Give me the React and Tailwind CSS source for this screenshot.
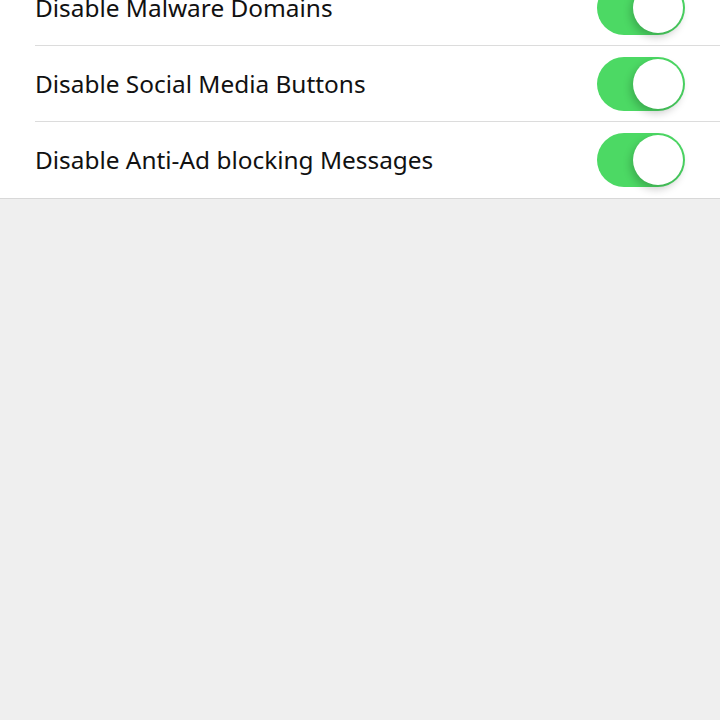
import React from "react";

const rows = [
  "Disable Malware Domains",
  "Disable Social Media Buttons",
  "Disable Anti-Ad blocking Messages",
];

function Toggle() {
  return (
    <div className="relative w-[88px] h-[54px] rounded-full bg-[#4cd964] shrink-0">
      <div className="absolute right-[2px] top-[2px] w-[50px] h-[50px] rounded-full bg-white shadow-[-2px_4px_8px_rgba(0,0,0,0.22)]" />
    </div>
  );
}

export default function App() {
  return (
    <div
      className="w-[720px] h-[720px] overflow-hidden bg-[#efefef]"
      style={{ fontFamily: '"Source Sans Pro", "Noto Sans", "Open Sans", sans-serif' }}
    >
      <div className="-mt-[30px] bg-white border-b border-[#d8d8d8]">
        {rows.map((r, i) => (
          <div key={r} className="pl-[35px]">
            <div
              className={
                "flex items-center justify-between h-[76px] pr-[35px] " +
                (i < rows.length - 1 ? "border-b border-[#dcdcdc]" : "")
              }
            >
              <span className="text-[24.4px] text-[#111] pt-[1px]">{r}</span>
              <Toggle />
            </div>
          </div>
        ))}
      </div>
    </div>
  );
}
